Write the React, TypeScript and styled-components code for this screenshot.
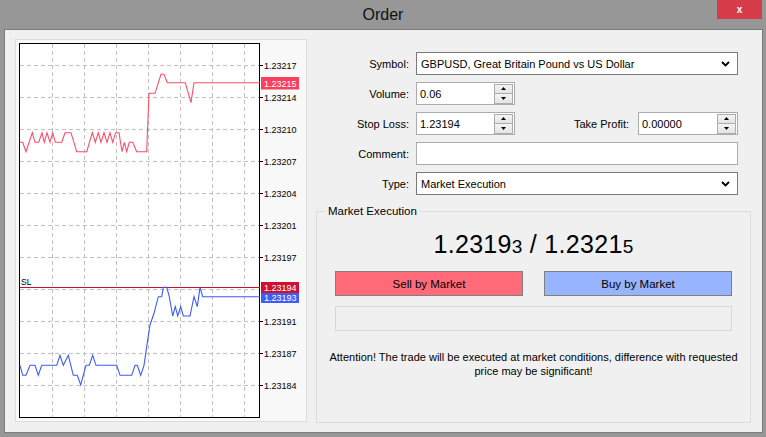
import React from "react";
import styled, { createGlobalStyle } from "styled-components";

const GlobalStyle = createGlobalStyle`
  html, body { margin: 0; padding: 0; background: #979797; }
  body { font-family: "Liberation Sans", Arial, sans-serif; font-size: 11px; color: #000; }
  * { box-sizing: border-box; }
`;

const Window = styled.div`
  width: 766px;
  height: 437px;
  display: flex;
  flex-direction: column;
  background: #979797;
`;

const TitleBar = styled.div`
  height: 29px;
  flex: none;
  display: grid;
  grid-template-columns: 1fr auto 1fr;
  align-items: start;
`;

const Title = styled.div`
  grid-column: 2;
  font-size: 16px;
  line-height: 29px;
  color: #111;
`;

const CloseButton = styled.div`
  grid-column: 3;
  justify-self: end;
  margin-right: 4px;
  width: 45px;
  height: 19px;
  background: #d63c49;
  color: #fff;
  font-size: 10px;
  font-weight: bold;
  display: flex;
  align-items: center;
  justify-content: center;
`;

const Client = styled.div`
  flex: none;
  height: 404px;
  margin: 0 3px 0 4px;
  border: 1px solid #7c7c7c;
  background: #f0f0f0;
  display: flex;
  align-items: flex-start;
  padding: 9px 0 0 10px;
`;

const ChartPanel = styled.div`
  width: 292px;
  height: 383px;
  border: 1px solid #dcdcdc;
  background: #f8f8f8;
  flex: none;
`;

const ChartSvg = styled.svg`
  display: block;
  width: 290px;
  height: 381px;
`;

const RightColumn = styled.div`
  width: 435px;
  margin-left: 9px;
  padding-top: 13px;
  display: flex;
  flex-direction: column;
`;

const FormGrid = styled.div`
  display: grid;
  grid-template-columns: 93px 322px;
  column-gap: 7px;
  row-gap: 7px;
  grid-auto-rows: 23px;
  align-items: center;
`;

const Label = styled.div`
  text-align: right;
  white-space: nowrap;
`;

const FieldRow = styled.div`
  display: flex;
  align-items: center;
  height: 23px;
`;

const InlineLabel = styled.div`
  margin-left: auto;
  margin-right: 9px;
  white-space: nowrap;
`;

const SelectBox = styled.div`
  height: 23px;
  border: 1px solid #7a7a7a;
  background: #fff;
  display: flex;
  align-items: center;
  padding: 0 7px 0 4px;
`;

const SelectText = styled.div`
  flex: 1;
`;

const TextBox = styled.div<{ $w?: number }>`
  height: 23px;
  width: ${(p) => (p.$w ? `${p.$w}px` : "100%")};
  border: 1px solid #acacac;
  background: #fff;
  display: flex;
  align-items: center;
  padding: 0 1px 0 3px;
`;

const BoxText = styled.div`
  flex: 1;
`;

const SpinColumn = styled.div`
  width: 19px;
  height: 20px;
  display: flex;
  flex-direction: column;
`;

const SpinHalf = styled.div`
  flex: 1;
  border: 1px solid #adadad;
  background: linear-gradient(#f4f4f4, #e4e4e4);
  display: flex;
  align-items: center;
  justify-content: center;
  & + & { border-top: none; }
`;

const Group = styled.fieldset`
  margin: 10px 0 0 0;
  width: 435px;
  height: 218px;
  border: 1px solid #dcdcdc;
  padding: 0 18px;
  display: block;
`;

const Legend = styled.legend`
  margin-left: -10px;
  padding: 0 3px;
  line-height: 13px;
  font-size: 11.5px;
`;

const Quote = styled.div`
  margin-top: 11px;
  text-align: center;
  font-size: 25px;
  line-height: 30px;
  letter-spacing: 0.3px;
`;

const QuoteSmall = styled.span`
  font-size: 19px;
`;

const ButtonRow = styled.div`
  margin-top: 9px;
  display: flex;
  gap: 21px;
`;

const TradeButton = styled.div<{ $bg: string }>`
  flex: 1;
  height: 25px;
  background: ${(p) => p.$bg};
  border: 1px solid #808080;
  display: flex;
  align-items: center;
  justify-content: center;
  font-size: 11.5px;
`;

const StatusBox = styled.div`
  margin-top: 10px;
  height: 25px;
  border: 1px solid #d8d8d8;
  background: #f0f0f0;
`;

const Notice = styled.div`
  margin: 19px -18px 0;
  text-align: center;
  line-height: 14px;
  font-size: 11px;
`;

const Chevron = () => (
  <svg width="9" height="6" viewBox="0 0 9 6">
    <path d="M1 1 L4.5 4.5 L8 1" fill="none" stroke="#000" strokeWidth="1.8" />
  </svg>
);

const Spinner = () => (
  <SpinColumn>
    <SpinHalf>
      <svg width="5" height="3" viewBox="0 0 5 3">
        <path d="M0 3 L2.5 0 L5 3 Z" fill="#000" />
      </svg>
    </SpinHalf>
    <SpinHalf>
      <svg width="5" height="3" viewBox="0 0 5 3">
        <path d="M0 0 L2.5 3 L5 0 Z" fill="#000" />
      </svg>
    </SpinHalf>
  </SpinColumn>
);

const askPts =
  "20,142.3 22.7,142.3 26,151.7 32.3,132.7 35,142.3 38.7,142.3 42,132.7 44.3,142.3 47,132.7 50,142.3 52.7,132.7 55.3,142.3 61.7,142.3 65,132.7 71,132.7 76.7,151.7 86.7,151.7 92.3,132.7 95.3,142.3 98.3,132.7 101,142.3 104,132.7 107,142.3 110,132.7 112.7,142.3 115.7,132.7 119,132.7 122,151.7 124.3,142.3 126.7,151.7 129.3,142.3 132.7,142.3 136.7,151.7 146.7,151.7 149,93.3 155,93.3 161,74.3 164,74.3 167.3,82.7 185.3,82.7 191,102.7 194,82.7 260,82.7";

const bidPts =
  "20,365.3 22.7,375.3 26,375.3 30,365.3 35,365.3 38.3,375.3 41.7,365.3 56.7,365.3 60,355.3 63.3,365.3 68.3,355.3 73.3,375.3 77.3,375.3 80.7,385 86,365.3 89.3,365.3 92.7,355.3 96,365.3 116.7,365.3 120,375.3 131.7,375.3 135,365.3 137.3,365.3 140.7,375.3 144,365.3 146.7,346.7 150,325 154,313.3 158.3,296.7 161.7,296.7 163.3,287.3 166.7,287.3 169.3,296.7 172.7,316 175.3,306.7 177.7,316 180.7,306.7 183.3,316 190,316 194,296.7 197.3,306.7 200,287.3 202.7,296.7 260,296.7";

const hLines = [65, 97, 129, 161, 193, 225, 257, 289, 321, 353, 385];
const vLines = [52, 84, 116, 148, 180, 212, 244];
const axisLabels: [number, string][] = [
  [65, "1.23217"],
  [97, "1.23214"],
  [129, "1.23210"],
  [161, "1.23207"],
  [193, "1.23204"],
  [225, "1.23201"],
  [257, "1.23197"],
  [321, "1.23191"],
  [353, "1.23187"],
  [385, "1.23184"],
];

const PriceChart = () => (
  <ChartSvg viewBox="16 40 290 381" fontFamily="'Liberation Sans', Arial, sans-serif" fontSize="9">
    <rect x="19.5" y="43.5" width="240" height="374" fill="#fff" stroke="#000" />
    {hLines.map((y) => (
      <line key={"h" + y} x1="20" x2="259" y1={y + 0.5} y2={y + 0.5} stroke="#c0c0c0" strokeDasharray="4 3" />
    ))}
    {vLines.map((x) => (
      <line key={"v" + x} x1={x + 0.5} x2={x + 0.5} y1="44" y2="417" stroke="#c0c0c0" strokeDasharray="4 3" />
    ))}
    {axisLabels.map(([y, t]) => (
      <g key={t}>
        <line x1="259" x2="263" y1={y + 0.5} y2={y + 0.5} stroke="#000" />
        <text x="264" y={y + 3.5} fill="#000">{t}</text>
      </g>
    ))}
    <line x1="20" x2="260" y1="287.5" y2="287.5" stroke="#c8102e" />
    <text x="21" y="285" fill="#000" fontSize="8.5">SL</text>
    <polyline points={askPts} fill="none" stroke="#ff4d68" strokeWidth="1.1" />
    <polyline points={bidPts} fill="none" stroke="#3d5bff" strokeWidth="1.1" />
    <rect x="261" y="77" width="38" height="12.5" fill="#f6405c" />
    <text x="264" y="86.5" fill="#fff">1.23215</text>
    <rect x="261" y="291" width="38" height="12" fill="#3d5bff" />
    <text x="264" y="300.5" fill="#fff">1.23193</text>
    <rect x="261" y="282" width="38" height="11" fill="#d0102e" />
    <text x="264" y="291" fill="#fff">1.23194</text>
  </ChartSvg>
);

export default function App() {
  return (
    <>
      <GlobalStyle />
      <Window>
        <TitleBar>
          <Title>Order</Title>
          <CloseButton>x</CloseButton>
        </TitleBar>
        <Client>
          <ChartPanel>
            <PriceChart />
          </ChartPanel>
          <RightColumn>
            <FormGrid>
              <Label>Symbol:</Label>
              <SelectBox>
                <SelectText>GBPUSD, Great Britain Pound vs US Dollar</SelectText>
                <Chevron />
              </SelectBox>
              <Label>Volume:</Label>
              <FieldRow>
                <TextBox $w={99}>
                  <BoxText>0.06</BoxText>
                  <Spinner />
                </TextBox>
              </FieldRow>
              <Label>Stop Loss:</Label>
              <FieldRow>
                <TextBox $w={99}>
                  <BoxText>1.23194</BoxText>
                  <Spinner />
                </TextBox>
                <InlineLabel>Take Profit:</InlineLabel>
                <TextBox $w={100}>
                  <BoxText>0.00000</BoxText>
                  <Spinner />
                </TextBox>
              </FieldRow>
              <Label>Comment:</Label>
              <TextBox />
              <Label>Type:</Label>
              <SelectBox>
                <SelectText>Market Execution</SelectText>
                <Chevron />
              </SelectBox>
            </FormGrid>
            <Group>
              <Legend>Market Execution</Legend>
              <Quote>
                1.2319<QuoteSmall>3</QuoteSmall> / 1.2321<QuoteSmall>5</QuoteSmall>
              </Quote>
              <ButtonRow>
                <TradeButton $bg="#ff6b78">Sell by Market</TradeButton>
                <TradeButton $bg="#99b4ff">Buy by Market</TradeButton>
              </ButtonRow>
              <StatusBox />
              <Notice>
                Attention! The trade will be executed at market conditions, difference with requested
                <br />
                price may be significant!
              </Notice>
            </Group>
          </RightColumn>
        </Client>
      </Window>
    </>
  );
}
